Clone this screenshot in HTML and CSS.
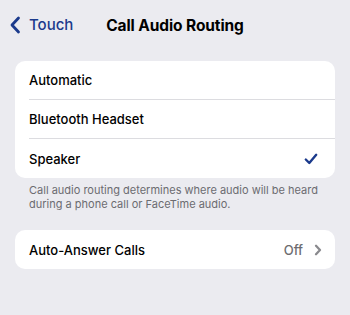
FILE: index.html
```html
<!DOCTYPE html>
<html>
<head>
<meta charset="utf-8">
<link rel="stylesheet" href="styles.css">
</head>
<body>
<div class="screen">
  <header class="nav">
    <div class="back">
      <svg class="back-icon" width="12" height="18" viewBox="0 0 12 18"><path d="M9.5 2 L3 9 L9.5 16" fill="none" stroke="currentColor" stroke-width="2.8" stroke-linecap="round" stroke-linejoin="round"/></svg>
      <span>Touch</span>
    </div>
    <div class="title">Call Audio Routing</div>
  </header>
  <section class="group">
    <div class="row"><span>Automatic</span></div>
    <div class="row"><span>Bluetooth Headset</span></div>
    <div class="row"><span>Speaker</span>
      <svg class="check" width="14" height="12" viewBox="0 0 14 12"><path d="M1.8 6.5 L5.3 10 L12.2 1.8" fill="none" stroke="currentColor" stroke-width="2.4" stroke-linecap="round" stroke-linejoin="round"/></svg>
    </div>
  </section>
  <p class="footer">Call audio routing determines where audio will be heard during a phone call or FaceTime audio.</p>
  <section class="group second">
    <div class="row last-row"><span>Auto-Answer Calls</span>
      <span class="value">Off
        <svg class="chev" width="8" height="12" viewBox="0 0 8 12"><path d="M2 1.8 L6 6 L2 10.2" fill="none" stroke="currentColor" stroke-width="2.3" stroke-linecap="round" stroke-linejoin="round"/></svg>
      </span>
    </div>
  </section>
</div>
</body>
</html>
```
FILE: styles.css
```css
* { box-sizing: border-box; }
html, body { margin: 0; padding: 0; }
body {
  background: #ebebf0;
  font-family: Inter, "Liberation Sans", sans-serif;
  color: #000;
  width: 350px;
  height: 315px;
  overflow: hidden;
}
.screen { padding: 0 15px; }
.nav {
  position: relative;
  height: 50px;
  display: flex;
  align-items: center;
  justify-content: center;
}
.back {
  position: absolute;
  left: -6px;
  top: 15px;
  display: flex;
  align-items: center;
  gap: 8px;
  color: #1b3a8c;
  font-size: 15px;
  font-weight: 500;
}
.back-icon { display: block; }
.title {
  font-weight: 700;
  font-size: 15.5px;
  letter-spacing: -0.1px;
}
.group {
  margin-top: 11px;
  background: #fff;
  border-radius: 10px;
  overflow: hidden;
}
.row {
  height: 39px;
  margin-left: 14px;
  padding-right: 16px;
  display: flex;
  align-items: center;
  justify-content: space-between;
  font-size: 13px;
  font-weight: 500;
  border-bottom: 1px solid #dcdce0;
}
.row:last-child { border-bottom: none; }
.last-row { padding-right: 13px; }
.check { color: #1b3a8c; display: block; margin-right: 1px; }
.footer {
  margin: 6px 0 0 14px;
  font-size: 11px;
  line-height: 13.5px;
  color: #6c6c70;
}
.second { margin-top: 19px; }
.value {
  display: flex;
  align-items: center;
  gap: 11px;
  color: #6c6c70;
}
.chev { color: #8a8a8e; display: block; }
```
